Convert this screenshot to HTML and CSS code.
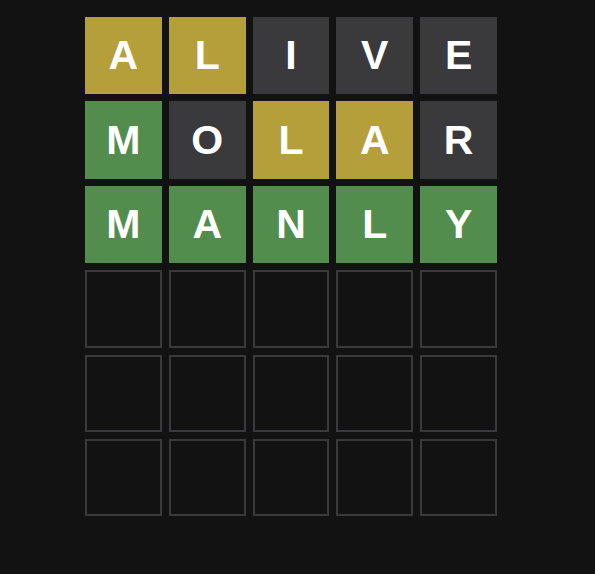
FILE: index.html
```html
<!DOCTYPE html>
<html lang="en">
<head>
  <meta charset="UTF-8">
  <title>Wordle</title>
  <link rel="stylesheet" href="styles.css">
</head>
<body>
  <div class="board">
    <div class="tile present">A</div>
    <div class="tile present">L</div>
    <div class="tile absent">I</div>
    <div class="tile absent">V</div>
    <div class="tile absent">E</div>

    <div class="tile correct">M</div>
    <div class="tile absent">O</div>
    <div class="tile present">L</div>
    <div class="tile present">A</div>
    <div class="tile absent">R</div>

    <div class="tile correct">M</div>
    <div class="tile correct">A</div>
    <div class="tile correct">N</div>
    <div class="tile correct">L</div>
    <div class="tile correct">Y</div>

    <div class="tile"></div>
    <div class="tile"></div>
    <div class="tile"></div>
    <div class="tile"></div>
    <div class="tile"></div>

    <div class="tile"></div>
    <div class="tile"></div>
    <div class="tile"></div>
    <div class="tile"></div>
    <div class="tile"></div>

    <div class="tile"></div>
    <div class="tile"></div>
    <div class="tile"></div>
    <div class="tile"></div>
    <div class="tile"></div>
  </div>
</body>
</html>
```

FILE: styles.css
```css
html, body {
  margin: 0;
  background: #121213;
  height: 100%;
}
body {
  font-family: "Liberation Sans", Arial, sans-serif;
  padding: 17px 0 0 85px;
  box-sizing: border-box;
}
.board {
  display: grid;
  grid-template-columns: repeat(5, 76.8px);
  grid-template-rows: repeat(6, 77.4px);
  column-gap: 7px;
  row-gap: 7px;
}
.tile {
  box-sizing: border-box;
  border: 2px solid #3a3a3c;
  display: flex;
  align-items: center;
  justify-content: center;
  color: #ffffff;
  font-weight: bold;
  font-size: 41px;
  line-height: 1;
}
.present {
  background: #b59f3b;
  border-color: #b59f3b;
}
.absent {
  background: #3a3a3c;
  border-color: #3a3a3c;
}
.correct {
  background: #538d4e;
  border-color: #538d4e;
}
```
